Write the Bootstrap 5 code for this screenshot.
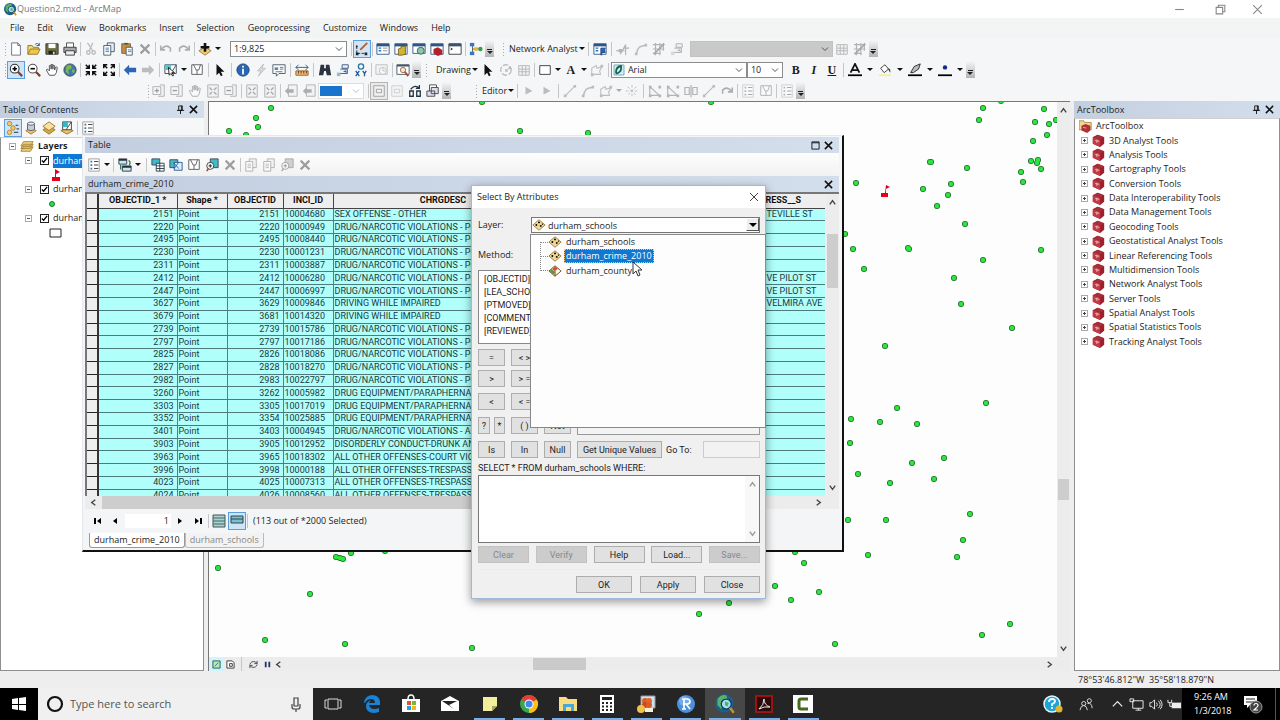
<!DOCTYPE html>
<html lang="en">
<head>
<meta charset="utf-8">
<meta name="viewport" content="width=device-width, initial-scale=1">
<title>Question2.mxd - ArcMap</title>
<link href="https://cdn.jsdelivr.net/npm/bootstrap@5.3.0/dist/css/bootstrap.min.css" rel="stylesheet">
<style>
:root{--ui:"Open Sans","Noto Sans",sans-serif;--grid:Roboto,"Liberation Sans",sans-serif;--sel:#0f78d2;--face:#f0f0f0;--band:linear-gradient(90deg,#c3cfe0,#d3deec)}
body{font:9px/14px var(--ui);color:#1c1c1c;background:#eee}
svg{display:block;width:14px;height:14px;flex:none}
button,select,input,textarea{font:inherit;color:inherit}
.plain{background:none;border:0;padding:0}
.btn{--bs-btn-font-size:9px;--bs-btn-line-height:12px;--bs-btn-padding-x:0;--bs-btn-padding-y:0;--bs-btn-border-radius:0;--bs-btn-color:#1c1c1c}
.titlebar{height:18px;background:#fff;color:#777}
.titlebar svg{width:13px;height:13px}
.menubar{height:20px;background:#f3f4f4}
.menubar a{color:#222;text-decoration:none;padding:0 7px 0 6px}
.tools{background:#f5f6f7}
.toolrow{height:21px}
.tb{width:18px;height:18px;display:flex;align-items:center;justify-content:center;flex:none}
.tb.dim{opacity:.45;filter:grayscale(1)}
.tb.on,.tb.on:hover{background:#cfe4f7;border-color:#5a9fdd}
.tb.off-on{border-color:#b5b5b5;background:#e9e9e9}
.vsep{width:1px;height:14px;margin:0 1px;background:#c4c6c8;flex:none}
.vsep.roomy{margin:0 2px}
.grip{width:3px;height:14px;flex:none;background:radial-gradient(circle,#aaa 1px,transparent 1px) 0 0/3px 3px}
.caret{width:8px;flex:none;display:flex;justify-content:center}
.caret.broad{width:12px}
.caret::before{content:"";border:3px solid transparent;border-top-color:#111;border-bottom:0}
.caret.pale::before{border-top-color:#aaa}
.more{width:9px;height:17px;background:linear-gradient(#f5f6f7,#b4b4b4);display:flex;flex-direction:column;align-items:center;justify-content:flex-end;gap:1px;padding-bottom:3px;flex:none}
.more::before{content:"";width:5px;height:1px;background:#222}
.more::after{content:"";border:3px solid transparent;border-top-color:#222;border-bottom:0}
.combo{appearance:none;height:16px;border:1px solid #8c8c8c;border-radius:0;padding:0 3px;line-height:13px;background:#fff url("data:image/svg+xml,%3Csvg xmlns='http://www.w3.org/2000/svg' viewBox='0 0 8 8'%3E%3Cpath d='M1 2.500l3 3 3-3' fill='none' stroke='%23555'/%3E%3C/svg%3E") no-repeat right 3px center/8px}
.combo:disabled{opacity:1;background-color:#c9c9c9;border-color:#c2c2c2}
.scale-box{width:117px}.font-box{width:136px}.size-box{width:36px}.route-box{width:143px}
.pct-box{width:46px;border-color:#ddd;background-image:linear-gradient(#1874cd,#1874cd),url("data:image/svg+xml,%3Csvg xmlns='http://www.w3.org/2000/svg' viewBox='0 0 8 8'%3E%3Cpath d='M1 2.500l3 3 3-3' fill='none' stroke='%23bbb'/%3E%3C/svg%3E");background-size:22px 10px,8px;background-position:1px center,right 3px center}
.fontmark{left:2px;top:2px;width:12px;height:12px}
.fontwrap .combo{padding-left:16px}
.serif{font:bold 12px/14px "Liberation Serif",serif}
.workspace{min-height:0}
.pane-head{height:17px;background:var(--band);padding:0 6px 0 3px;display:flex;align-items:center;flex:none}
.pane-head svg{width:9px;height:9px}
.toc{width:204px}
.toc-tools{height:19px;background:#f6f7f8}
.pane-body{background:#fff;border:1px solid #8e8e8e;border-top-color:#d0d0d0}
.toc-tree{height:101px;width:82px;margin-top:1px}
.tree{display:grid;grid-auto-rows:1fr;list-style:none;padding:0}
.tree li{display:flex;align-items:center;min-width:0;white-space:nowrap}
.fold{width:7px;height:7px;border:1px solid #aaa;background:linear-gradient(#555,#555) center/3px 1px no-repeat #fff;flex:none;padding:0}
.fold.plus{background:linear-gradient(#444,#444) center/3px 1px no-repeat,linear-gradient(#444,#444) center/1px 3px no-repeat,#fff}
.tick{appearance:none;width:9px;height:9px;border:1px solid #222;margin:0;background:#fff url("data:image/svg+xml,%3Csvg xmlns='http://www.w3.org/2000/svg' viewBox='0 0 8 8'%3E%3Cpath d='M1 4l2 2 4-5' fill='none' stroke='%23000' stroke-width='1.500'/%3E%3C/svg%3E") center/7px no-repeat;flex:none}
.picked{background:var(--sel);color:#fff}
.toolbox{width:206px}
.toolbox .tree{height:230px;margin:0}
.toolbox .tool{padding-left:6px}
.toolbox .tree svg{width:13px;height:13px}
.map{border-left:1px solid #777;border-top:1px solid #777;background:#fdfdfd;margin-left:4px}
.map-canvas{width:100%;height:100%}
.vbar{width:13px;background:#ececec;flex:none}
.vbar .thumb{width:11px;background:#cdcdcd}
.hbar{height:14px;background:#ececec;flex:none}
.arrow{width:9px;height:9px}
.map .vbar .thumb{height:21px;margin-top:364px}
.map .hbar .thumb{width:53px;height:12px;background:#cacaca;margin-left:250px}
.mapbtn{width:14px;height:13px}.mapbtn svg{width:9px;height:9px}
.statusbar{height:17px;background:#eee}
.coords{width:202px}
.table-win{left:82px;top:135px;width:762px;height:417px;background:#f4f5f6;border:1px solid #e4e8ee;border-right:2px solid #111;border-bottom:2px solid #111;padding:1px 3px 0 2px}
.table-tools{height:23px;background:linear-gradient(#fdfdfd,#f1f2f3)}
.table-win .pane-head{height:16px}
.gridbox{border:2px solid #777;border-right-width:0;border-bottom:0;height:304px;background:#f0f0f0}
.recs{table-layout:fixed;border-collapse:collapse;width:738px;font:9px/11px var(--grid);color:#1b3a3e}
.recs th{height:14px;background:#eee;color:#111;text-align:center;padding:0;border-right:1px solid #444;border-bottom:1px solid #444;overflow:hidden;font-weight:700}
.recs td{background:#b0fffb;border-right:1px solid #4d8483;border-bottom:1px solid #4d7b7b;padding:0 1px;white-space:nowrap;overflow:hidden}
.recs tbody{height:294px}
.recs .n{text-align:right;padding-right:3px}
.recs .rowmark{background:#eee;border-right:2px solid #333;border-bottom:1px solid #222}
.recs td:last-child,.recs th:last-child{border-right:0}
.c0{width:11px}.c1{width:79px}.c2{width:50px}.c3{width:56px}.c4{width:50px}.c5{width:220px}.c6{width:212px}
.gridbox .vbar .thumb{height:54px;margin-top:27px}
.table-win .hbar{height:13px}
.table-win .hbar .bar{background:#cdcdcd;width:640px}
.nav-strip{height:24px}
.nav-strip .recno{width:46px;border:0;background:#fff;text-align:right;padding:0 2px;height:14px}
.sheet-tabs{height:18px}
.sheet-tabs button{border:1px solid #bbb;border-top:0;border-radius:0 0 3px 3px;background:#f2f2f2;color:#888;padding:0 4px;height:15px}
.sheet-tabs .active{background:#fff;color:#222;border-color:#999}
.dlg{left:471px;top:185px;width:295px;height:414px;background:var(--face);border:1px solid #9fb8dc;box-shadow:0 3px 9px rgba(0,0,0,.4)}
.dlg-head{height:22px;background:#fff;padding-left:5px}
.dlg-main{padding:9px 5px 0 6px}
.face{font-family:var(--grid)}
.layer-row{height:16px}
.lbl{width:53px}
.layer-select{height:16px;border:1px solid #777;padding:0 16px;appearance:none;background:#fff;border-radius:0;line-height:13px}
.layer-mark{left:1px;top:1px}
.drop-mark{right:1px;top:1px;width:13px;height:13px;background:#eee;border:1px solid;border-color:#fff #555 #555 #fff;padding:4px 0 0 2px}
.drop-mark::before{content:"";display:block;width:0;border:4px solid transparent;border-top-color:#000;border-bottom:0}
.layer-list{left:58px;top:48px;width:236px;height:194px;border:1px solid #888;background:#fdfdfd;z-index:3}
.layer-list ul{height:43px;margin:0}
.layer-list li{padding-left:9px}
.layer-list li::before{content:"";width:8px;border-top:1px dotted #888}
.layer-list li>span{padding:0 1px;margin-left:2px;line-height:12px;border:1px solid transparent}
.layer-list li .picked{border:1px dotted #f5c080}
.layer-list .stem{left:9px;top:7px;height:29px;border-left:1px dotted #888}
.method{margin-top:15px}
.fields{width:130px;height:74px;border:1px solid #888;background:#fff;overflow:hidden;padding:3px 3px 0;border-radius:0;display:block;margin-top:8px}
.fields option{padding:0 2px;font:9px/13px var(--grid);min-height:13px}
.ops{display:grid;grid-template-columns:27px 27px 27px 1fr;grid-template-rows:21px 23px 24px 24px 17px;column-gap:6px;align-items:start;margin-top:5px}
.key{height:17px;background:#e1e1e1;border:1px solid #adadad;line-height:14px;font-family:var(--grid);white-space:nowrap}
.key:disabled{background:#ccc;border-color:#c2c2c2;color:#888;opacity:1}
.vals{grid-column:4;grid-row:1/5;height:86px;border:1px solid #999;background:#f3f3f3}
.goto{height:17px;border:1px solid #ccc;background:#f2f2f2;width:57px}
.uniq{width:85px}
.sql-lbl{margin-top:3px}
.sql{height:68px;border:1px solid #777;background:#fff;resize:none;display:block;padding:2px 14px 2px 3px}
.sqlbar{right:1px;top:1px;bottom:1px;width:14px;background:#f3f3f3;opacity:.55}
.key-row{margin-top:3px}
.ok-row{margin-top:6px;padding-top:6px}
.w51{width:51px}.w56{width:56px}
.pointer{left:160px;top:75px;width:12px;height:17px;z-index:4}
.taskbar{height:32px;background:#252525;color:#fff}
.start{width:38px;background:#000}
.search{width:275px;background:#f0f0f0;color:#444;padding:0 8px;font-size:11px}
.search input{background:none;border:0;min-width:0;color:#444;outline:0}
.search input::placeholder{color:#555;opacity:1}
.search svg{width:18px;height:18px}
.apps{width:510px}
.apps button{flex:1 1 0;position:relative}
.apps svg{width:20px;height:20px}
.apps .live::after{content:"";position:absolute;bottom:0;left:4px;right:4px;height:2px;background:#76b0ea}
.apps .front{background:#474747}
.tray svg{width:15px;height:15px}
.tray .help{width:20px;height:20px}
.clock{background:#000;width:98px;font-size:9px;padding-left:12px}
.clock svg{width:20px;height:20px}
.edge{width:1px;background:#555}
</style>
</head>
<body class="vh-100 d-flex flex-column overflow-hidden position-relative">

<svg class="d-none" aria-hidden="true">
<symbol id="globe" viewBox="0 0 16 16"><circle cx="7.500" cy="7.500" r="7.500" fill="#1d5f86"/><path d="M2 4q3-4 7-3l1 3-3 3-2 5-3-3z" fill="#58b368"/><circle cx="9" cy="8" r="4" fill="#a7dcf0" stroke="#083a5e"/><path d="M8 6l3 1-1 3-2-1z" fill="#4fae6c"/><path d="M12 11l3 4" stroke="#c29134" stroke-width="2"/></symbol>
<symbol id="new" viewBox="0 0 16 16"><path d="M3 1h7l3 3v11H3zM10 1v3h3" fill="#fff" stroke="#667"/></symbol>
<symbol id="open" viewBox="0 0 16 16"><path d="M1 14V4h5l1 2h6v3" fill="#f7d774" stroke="#8a7326"/><path d="M1 14l3-6h11l-3 6z" fill="#f2c744" stroke="#8a7326"/><path d="M9 3q3-3 5 1m0-3v3h-3" stroke="#258" fill="none"/></symbol>
<symbol id="save" viewBox="0 0 16 16"><path d="M1 2h14v12H1z" fill="#6b6f3a" stroke="#333"/><path d="M4 2h8v5H4z" fill="#fff"/><path d="M4 10h8v4H4z" fill="#222"/><path d="M9 11h2v3H9z" fill="#ddd"/></symbol>
<symbol id="print" viewBox="0 0 16 16"><path d="M4 6V1h8v5" fill="#fff" stroke="#444"/><path d="M1 6h14v6H1z" fill="#aaa" stroke="#333"/><path d="M3 10h10v5H3z" fill="#eee" stroke="#333"/></symbol>
<symbol id="cut" viewBox="0 0 16 16"><path d="M4 1l6 9M10 1L6 10" stroke="#777" stroke-width="1.500"/><circle cx="5" cy="12" r="2" fill="none" stroke="#777" stroke-width="1.500"/><circle cx="11" cy="12" r="2" fill="none" stroke="#777" stroke-width="1.500"/></symbol>
<symbol id="copy" viewBox="0 0 16 16"><path d="M6 1h8v10H6z" fill="#e8eef8" stroke="#456"/><path d="M2 4h8v11H2z" fill="#fff" stroke="#456"/><path d="M4 7h4M4 9h4M4 11h4" stroke="#47a"/></symbol>
<symbol id="paste" viewBox="0 0 16 16"><path d="M2 2h10v11H2z" fill="#c98d3f" stroke="#664"/><path d="M5 1h4v2H5z" fill="#555"/><path d="M7 6h7v9H7z" fill="#fff" stroke="#456"/><path d="M9 9h4M9 11h4" stroke="#47a"/></symbol>
<symbol id="x" viewBox="0 0 16 16"><path d="M3 3l10 10M13 3L3 13" stroke="#333" stroke-width="2.500"/></symbol>
<symbol id="undo" viewBox="0 0 16 16"><path d="M2 4v5h5M3 8q5-6 10-1v4" fill="none" stroke="#555" stroke-width="1.800"/></symbol>
<symbol id="redo" viewBox="0 0 16 16"><path d="M14 4v5H9M13 8Q8 2 3 7v4" fill="none" stroke="#555" stroke-width="1.800"/></symbol>
<symbol id="add" viewBox="0 0 16 16"><path d="M1 10l7-4 7 4-7 5z" fill="#f0cf72" stroke="#97793a"/><path d="M8 1v10M3 6h10" stroke="#111" stroke-width="3"/></symbol>
<symbol id="edit" viewBox="0 0 16 16"><path d="M2 5v8h11" fill="none" stroke="#222" stroke-dasharray="3 1.500"/><path d="M1 12h3v3H1zM11 12h3v3h-3zM1 4h2v2H1z" fill="#222"/><path d="M6 9L14 1" stroke="#b55a2a" stroke-width="2"/></symbol>
<symbol id="toc" viewBox="0 0 16 16"><path d="M1 2h14v12H1z" fill="#fff" stroke="#2d5688"/><path d="M1 2h14v3H1z" fill="#2d5688"/><path d="M3 7h3M3 10h3" stroke="#27b" stroke-width="1.500"/><path d="M8 7h5M8 10h5" stroke="#888"/></symbol>
<symbol id="naw" viewBox="0 0 16 16"><path d="M1 2h14v12H1z" fill="#fff" stroke="#2d5688"/><path d="M1 2h14v3H1z" fill="#2d5688"/><path d="M3 7h3M3 10h3" stroke="#27b" stroke-width="1.500"/><path d="M9 15V7h5l-1 2 1 3h-4v3" fill="#2b63c0" stroke="#1c3f80"/></symbol>
<symbol id="cat" viewBox="0 0 16 16"><path d="M1 2h14v12H1z" fill="#fff" stroke="#2d5688"/><path d="M1 2h14v3H1z" fill="#2d5688"/><path d="M5 8l3-1v-2h5v9l-4 1H5z" fill="#d1b52e" stroke="#776018"/></symbol>
<symbol id="find" viewBox="0 0 16 16"><path d="M1 2h14v11H1z" fill="#fff" stroke="#2d5688"/><path d="M1 2h14v3H1z" fill="#2d5688"/><circle cx="10" cy="10" r="4" fill="#8cc8a0" stroke="#357"/></symbol>
<symbol id="boxw" viewBox="0 0 16 16"><path d="M1 2h14v12H1z" fill="#fff" stroke="#2d5688"/><path d="M1 2h14v3H1z" fill="#2d5688"/><path d="M4 8l5-2 5 3v5l-5 2-5-3z" fill="#b3202a"/></symbol>
<symbol id="py" viewBox="0 0 16 16"><path d="M1 2h14v12H1z" fill="#fff" stroke="#333"/><path d="M1 2h14v3H1z" fill="#3e526c"/><path d="M3 7l2 1-2 1" fill="none" stroke="#222"/></symbol>
<symbol id="model" viewBox="0 0 16 16"><path d="M4 3v10M4 8h9" stroke="#555"/><path d="M1 1h5v4H1z" fill="#37c"/><path d="M1 11h5v4H1z" fill="#37c"/><path d="M6 6h4v4H6z" fill="#e4b32f"/><circle cx="13" cy="8" r="2.500" fill="#3a9c4b"/></symbol>
<symbol id="zin" viewBox="0 0 16 16"><path d="M10 10l5 5" stroke="#8a3b22" stroke-width="2.500"/><circle cx="6.500" cy="6.500" r="5" fill="#f6fbff" stroke="#333" stroke-width="1.200"/><path d="M6.500 4v5M4 6.500h5" stroke="#000" stroke-width="1.800"/></symbol>
<symbol id="zout" viewBox="0 0 16 16"><path d="M10 10l5 5" stroke="#8a3b22" stroke-width="2.500"/><circle cx="6.500" cy="6.500" r="5" fill="#fff" stroke="#555" stroke-width="1.200"/><path d="M4 6.500h5" stroke="#000" stroke-width="1.800"/></symbol>
<symbol id="hand" viewBox="0 0 16 16"><path d="M5 14L2 9q-1-2 1-2l2 2V3q1-1 2 0l0 4V2q1-1 2 0v5-4q1-1 2 0v5l1-3q1-1 2 0l-1 6-2 3z" fill="#fff" stroke="#444"/></symbol>
<symbol id="world" viewBox="0 0 16 16"><circle cx="8" cy="8" r="7" fill="#3f78b5" stroke="#345"/><path d="M4 3l5-1 1 4-4 2 1 5-4-3zM11 7l3 1-2 4-2-2z" fill="#7eb648"/></symbol>
<symbol id="shrink" viewBox="0 0 16 16"><path d="M2 2l4 4m0-4v4H2M14 2l-4 4m0-4v4h4M2 14l4-4m0 4v-4H2M14 14l-4-4m0 4v-4h4" fill="none" stroke="#111" stroke-width="1.700"/></symbol>
<symbol id="grow" viewBox="0 0 16 16"><path d="M6 6L2 2m0 4V2h4M10 6l4-4m0 4V2h-4M6 10l-4 4m0-4v4h4M10 10l4 4m0-4v4h-4" fill="none" stroke="#111" stroke-width="1.700"/></symbol>
<symbol id="left" viewBox="0 0 16 16"><path d="M1 8l6-6v3.500h8v5H7V14z" fill="#2f63b8"/></symbol>
<symbol id="right" viewBox="0 0 16 16"><path d="M15 8L9 2v3.500H1v5h8V14z" fill="#777"/></symbol>
<symbol id="self" viewBox="0 0 16 16"><path d="M1 2h13v10H1z" fill="#fff" stroke="#345"/><path d="M1 2h7v6H1z" fill="#5cc6cc"/><path d="M8 12L14 2" stroke="#345"/><path d="M5 5l1 9 2-2 2 3 1-1-2-3h3z" fill="#fff" stroke="#111"/></symbol>
<symbol id="clear" viewBox="0 0 16 16"><path d="M2 2h12v11H2z" fill="#fff" stroke="#555"/><path d="M4 2l3 6h3l2-6M8 8v5" fill="none" stroke="#555"/></symbol>
<symbol id="arrow" viewBox="0 0 16 16"><path d="M4 1v13l3-3 2 4 2-1-2-4h4z" fill="#111"/></symbol>
<symbol id="info" viewBox="0 0 16 16"><circle cx="8" cy="8" r="7" fill="#2a64b4" stroke="#163f78"/><path d="M8 3v2M8 6.500V13" stroke="#fff" stroke-width="2"/></symbol>
<symbol id="bolt" viewBox="0 0 16 16"><path d="M11 1L4 9h4l-3 6 8-9H9z" fill="#bbb" stroke="#777"/></symbol>
<symbol id="popup" viewBox="0 0 16 16"><path d="M1 2h14v10H8l-3 3v-3H1z" fill="#fff" stroke="#456"/><path d="M3 5h4v3H3z" fill="#58a"/><path d="M9 5h4M9 7h4M4 10h8" stroke="#666"/></symbol>
<symbol id="ruler" viewBox="0 0 16 16"><path d="M1 9h14v5H1z" fill="#f0b564" stroke="#90602a"/><path d="M4 9v3M7 9v3M10 9v3M13 9v3" stroke="#633"/><path d="M1 5h14M4 2L1 5l3 3M12 2l3 3-3 3" fill="none" stroke="#258"/></symbol>
<symbol id="bino" viewBox="0 0 16 16"><path d="M3 2h4v4h2V2h4l2 12h-5l-1-5H7l-1 5H1z" fill="#2a3440"/></symbol>
<symbol id="route" viewBox="0 0 16 16"><path d="M2 12h11V7H5M7 2h7v4H7z" fill="#eef" stroke="#357"/><path d="M1 11h4v4H1z" fill="#9bc"/><path d="M8 10l3-2 2 3z" fill="#37a"/></symbol>
<symbol id="xy" viewBox="0 0 16 16"><circle cx="8" cy="4" r="3" fill="none" stroke="#27a" stroke-width="1.500"/><path d="M2 9l4 6M6 9l-4 6M10 9l2 3 2-3M12 12v3" stroke="#245a9c" stroke-width="1.500" fill="none"/></symbol>
<symbol id="time" viewBox="0 0 16 16"><path d="M1 2h13v11H1z" fill="#eee" stroke="#777"/><circle cx="9" cy="9" r="4" fill="#fff" stroke="#777"/><path d="M9 6v3h3" stroke="#777" fill="none"/></symbol>
<symbol id="viewer" viewBox="0 0 16 16"><path d="M1 2h14v11H1z" fill="#fff" stroke="#456"/><path d="M1 2h14v2H1z" fill="#456"/><circle cx="8" cy="8" r="3" fill="#f7e4e0" stroke="#963"/><path d="M10 10l4 5" stroke="#a42" stroke-width="2"/></symbol>
<symbol id="rot" viewBox="0 0 16 16"><circle cx="8" cy="8" r="6" fill="none" stroke="#777" stroke-width="1.500" stroke-dasharray="6 2"/><path d="M7 7h3v3H7zM12 3l3 4h-5z" fill="#777"/></symbol>
<symbol id="gridi" viewBox="0 0 16 16"><path d="M2 3h12v11H2zM2 7h12M2 10h12M6 3v11M10 3v11" fill="#eee" stroke="#666"/></symbol>
<symbol id="netadd" viewBox="0 0 16 16"><path d="M0 10h10M5 14l6-11v12M9 7h6" fill="none" stroke="#666" stroke-width="1.300"/><path d="M3 8h4v4H3z" fill="#666"/></symbol>
<symbol id="netgrid" viewBox="0 0 16 16"><path d="M1 3h13M1 8h13M1 13h9M4 1v14M9 1v14M13 1v9" fill="none" stroke="#666" stroke-width="1.400"/><path d="M2 14L14 2" stroke="#444" stroke-width="2"/></symbol>
<symbol id="sq" viewBox="0 0 16 16"><path d="M2 3h12v10H2z" fill="#fff" stroke="#333"/></symbol>
<symbol id="poly" viewBox="0 0 16 16"><path d="M2 13V6l5-3 1 3 6-2-3 5 1 4z" fill="none" stroke="#777" stroke-width="1.200"/><path d="M1 12h3v3H1zM12 2h3v3h-3z" fill="#777"/></symbol>
<symbol id="bucket" viewBox="0 0 16 16"><path d="M3 6l5-4 4 5-5 4z" fill="#fff" stroke="#333"/><path d="M11 6q4 0 3 5l-2-3z" fill="#444"/><path d="M1 13h14v2H1z" fill="#f5f090"/></symbol>
<symbol id="pen" viewBox="0 0 16 16"><path d="M3 11l4-7 7-3-2 6-6 4z" fill="#bbb" stroke="#222"/><path d="M0 13h16v2H0z"/></symbol>
<symbol id="dotc" viewBox="0 0 16 16"><circle cx="8" cy="5" r="2.500" fill="#112a8c"/><path d="M0 13h16v2H0z"/></symbol>
<symbol id="pgin" viewBox="0 0 16 16"><path d="M9 1h5v13H7" fill="#eee" stroke="#555"/><path d="M1 3h9v9H1z" fill="#f4f4f4" stroke="#555"/><path d="M5.500 5v5M3 7.500h5" stroke="#333" stroke-width="1.500"/></symbol>
<symbol id="pgout" viewBox="0 0 16 16"><path d="M9 1h5v13H7" fill="#eee" stroke="#555"/><path d="M1 3h9v9H1z" fill="#f4f4f4" stroke="#555"/><path d="M3 7.500h5" stroke="#333" stroke-width="1.500"/></symbol>
<symbol id="pgarr" viewBox="0 0 16 16"><path d="M5 1h10v13H5z" fill="#eee" stroke="#555"/><path d="M1 8l4-4v2h6v4H5v2z" fill="#555"/></symbol>
<symbol id="page4" viewBox="0 0 16 16"><path d="M2 1h12v14H2z" fill="#eee" stroke="#555"/><path d="M4 4l3 3M12 4L9 7M4 12l3-3M12 12L9 9" stroke="#444" stroke-width="1.500"/></symbol>
<symbol id="draft" viewBox="0 0 16 16"><path d="M2 2h12v12H2zM5 6h6v4H5z" fill="#f2f2f2" stroke="#999"/></symbol>
<symbol id="swap" viewBox="0 0 16 16"><path d="M2 14V8h4v6zM10 14V8h4v6z" fill="#fff" stroke="#234" stroke-width="1.500"/><path d="M3 6q5-6 10-1M13 1v4H9" fill="none" stroke="#234" stroke-width="1.500"/></symbol>
<symbol id="layout" viewBox="0 0 16 16"><path d="M4 1h8v9H4z" fill="#fff" stroke="#444"/><path d="M1 8h9v6H1zM6 4h8v7H6z" fill="#dde" stroke="#444"/></symbol>
<symbol id="tri" viewBox="0 0 16 16"><path d="M4 3v9l8-4z" fill="#777"/></symbol>
<symbol id="line" viewBox="0 0 16 16"><path d="M3 13L13 3" stroke="#777" stroke-width="1.500"/><path d="M1 12h3v3H1zM12 1h3v3h-3z" fill="#777"/></symbol>
<symbol id="curve" viewBox="0 0 16 16"><path d="M3 13Q4 4 13 4" fill="none" stroke="#777" stroke-width="1.500"/><path d="M1 12h3v3H1zM12 2h3v3h-3z" fill="#777"/></symbol>
<symbol id="star" viewBox="0 0 16 16"><path d="M8 1v14M1 8h14M3 3l10 10M13 3L3 13" stroke="#777" stroke-dasharray="3 2"/></symbol>
<symbol id="verts" viewBox="0 0 16 16"><path d="M2 13V3l11 10z" fill="none" stroke="#666" stroke-width="1.300"/><path d="M1 2h3v3H1zM1 12h3v3H1zM12 12h3v3h-3zM12 2h3v3h-3z" fill="#666"/></symbol>
<symbol id="cutp" viewBox="0 0 16 16"><path d="M1 4h5v8H1zM10 4h5v8h-5zM8 1v14" fill="none" stroke="#666" stroke-width="1.400"/></symbol>
<symbol id="pin" viewBox="0 0 10 10"><path d="M3 1h4v5H3zM1 6h8M5 6v4M6 1v5" fill="none" stroke="#111"/></symbol>
<symbol id="bx" viewBox="0 0 10 10"><path d="M1 1l8 8M9 1L1 9" stroke="#111" stroke-width="1.700"/></symbol>
<symbol id="max" viewBox="0 0 10 10"><path d="M1 1h8v8H1zM1 2h8" fill="none" stroke="#111"/></symbol>
<symbol id="lst" viewBox="0 0 16 16"><path d="M2 1h12v14H2z" fill="#fff" stroke="#999"/><path d="M4 4h2M4 8h2M4 12h2" stroke="#37a" stroke-width="2"/><path d="M8 4h5M8 8h5M8 12h5" stroke="#333"/></symbol>
<symbol id="order" viewBox="0 0 16 16"><circle cx="4" cy="3" r="2.500" fill="#f2cd6a" stroke="#a8842b"/><circle cx="8" cy="8" r="2.500" fill="#f2cd6a" stroke="#a8842b"/><circle cx="4" cy="13" r="2.500" fill="#f2cd6a" stroke="#a8842b"/><path d="M11 5h3M12 9h3M9 13h5" stroke="#555" stroke-width="1.500"/></symbol>
<symbol id="src" viewBox="0 0 16 16"><path d="M2 11l6-3 6 3-6 4z" fill="#e9c46a" stroke="#a07a2a"/><path d="M4 3v7q4 2 8 0V3z" fill="#c7cdd8" stroke="#556"/><ellipse cx="8" cy="3" rx="4" ry="1.800" fill="#eef" stroke="#556"/></symbol>
<symbol id="vis" viewBox="0 0 16 16"><path d="M1 10l7-4 7 4-7 5z" fill="#d9a93f" stroke="#94702a"/><path d="M1 6l7-5 7 5-7 5z" fill="#f7e2a0" stroke="#94702a"/></symbol>
<symbol id="selt" viewBox="0 0 16 16"><path d="M1 11l7-3 7 3-7 4z" fill="#e9c46a" stroke="#94702a"/><path d="M3 1h10v9H3z" fill="#fff" stroke="#333"/><path d="M3 1h6v6H3z" fill="#35b8c4"/><path d="M7 10L13 1" stroke="#333"/></symbol>
<symbol id="layers" viewBox="0 0 16 16"><path d="M1 14l3-5h11l-3 5zM1 11l3-5h11l-3 5zM1 8l3-5h11l-3 5z" fill="#f1d48a" stroke="#a2802f"/></symbol>
<symbol id="flag" viewBox="0 0 10 14"><path d="M4 1l5 3-4 2v3h4v4H1V9h3z" fill="#e2001a"/></symbol>
<symbol id="rel" viewBox="0 0 16 16"><path d="M1 1h9v6H1zM5 9h10v6H5z" fill="#cfe6e6" stroke="#234"/><path d="M1 2h9M5 10h10" stroke="#234" stroke-width="2"/><path d="M12 3q3 1 1 5M3 8v5" fill="none" stroke="#2a7a4a" stroke-width="1.500"/></symbol>
<symbol id="selattr" viewBox="0 0 16 16"><path d="M1 1h9v7H1z" fill="#3cbcc8" stroke="#345"/><path d="M6 6h9v9H6zM6 9h9M6 12h9M10 6v9" fill="#fff" stroke="#234"/></symbol>
<symbol id="switch" viewBox="0 0 16 16"><path d="M1 2h9v9H1z" fill="#48b9c8" stroke="#345"/><path d="M6 5h9v9H6z" fill="#d8f0ff" stroke="#258"/><path d="M5 5l6 7M11 5l-5 7" stroke="#25a"/></symbol>
<symbol id="zsel" viewBox="0 0 16 16"><path d="M6 1h9v10H6z" fill="#45b9c4" stroke="#345"/><circle cx="6" cy="9" r="4" fill="#fff" stroke="#333"/><path d="M6 7v4M4 9h4" stroke="#111"/><path d="M4 12l-2 3" stroke="#a53" stroke-width="2"/></symbol>
<symbol id="box" viewBox="0 0 16 16"><path d="M1 4l6-3 8 3v8l-5 4-9-4z" fill="#9c1f2b"/><path d="M1 4l9 3v9l-9-4z" fill="#c23a46"/><path d="M1 4l6-3 8 3-5 3z" fill="#a5303a"/><path d="M4 8l5 1M6 7v4" stroke="#f0b8b8" stroke-width="1.200"/></symbol>
<symbol id="boxes" viewBox="0 0 16 16"><path d="M0 1h6l1 2h8v9H0z" fill="#f0d98a" stroke="#97843f"/><path d="M3 7l5-2 6 2v6l-4 3-7-3z" fill="#b23039"/><path d="M5 9l4 1" stroke="#f3c1c1"/></symbol>
<symbol id="pts" viewBox="0 0 16 16"><path d="M1 8l7-6 7 6-7 6z" fill="#f2d896" stroke="#9b7838"/><circle cx="8" cy="5" r="1.100"/><circle cx="5" cy="8" r="1.100"/><circle cx="10" cy="9" r="1.100"/><circle cx="12" cy="7" r=".8"/></symbol>
<symbol id="pol" viewBox="0 0 16 16"><path d="M1 8l7-6 7 6-7 6z" fill="#f0d080" stroke="#665020"/><path d="M8 3l3 2-3 3-3-2z" fill="#d8423a"/><path d="M4 6l4 3-2 3-4-4z" fill="#4a9a55"/><path d="M11 6l3 2-4 3-2-2z" fill="#fff"/><path d="M8 8v6" stroke="#665020"/></symbol>
<symbol id="up" viewBox="0 0 10 10"><path d="M2 7l3-4 3 4" fill="none" stroke="#444" stroke-width="1.500"/></symbol>
<symbol id="dn" viewBox="0 0 10 10"><path d="M2 3l3 4 3-4" fill="none" stroke="#444" stroke-width="1.500"/></symbol>
<symbol id="lt" viewBox="0 0 10 10"><path d="M7 2L3 5l4 3" fill="none" stroke="#444" stroke-width="1.500"/></symbol>
<symbol id="rt" viewBox="0 0 10 10"><path d="M3 2l4 3-4 3" fill="none" stroke="#444" stroke-width="1.500"/></symbol>
</svg>

<header class="titlebar d-flex align-items-center ps-1">
<svg><use href="#globe"/></svg><span>Question2.mxd - ArcMap</span>
<div class="ms-auto d-flex align-items-center gap-4 pe-3">
<button class="plain me-1" aria-label="Minimize"><svg viewBox="0 0 12 12"><path d="M2 6h8" stroke="#888"/></svg></button>
<button class="plain" aria-label="Restore"><svg viewBox="0 0 12 12"><path d="M2 4h6v6H2zM4 4V2h6v6H8" fill="none" stroke="#888"/></svg></button>
<button class="plain" aria-label="Close"><svg viewBox="0 0 12 12"><path d="M2 2l8 8M10 2l-8 8" stroke="#888"/></svg></button>
</div>
</header>

<nav class="menubar d-flex align-items-center ps-1 flex-shrink-0">
<a href="#">File</a><a href="#">Edit</a><a href="#">View</a><a href="#">Bookmarks</a><a href="#">Insert</a><a href="#">Selection</a><a href="#">Geoprocessing</a><a href="#">Customize</a><a href="#">Windows</a><a href="#">Help</a>
</nav>

<div class="tools flex-shrink-0">
<div class="toolrow d-flex align-items-center ps-1">
<i class="grip"></i>
<button class="btn tb" aria-label="New"><svg><use href="#new"/></svg></button><button class="btn tb" aria-label="Open"><svg><use href="#open"/></svg></button><button class="btn tb" aria-label="Save"><svg><use href="#save"/></svg></button><button class="btn tb" aria-label="Print"><svg><use href="#print"/></svg></button>
<i class="vsep"></i>
<button class="btn tb dim" aria-label="Cut"><svg><use href="#cut"/></svg></button><button class="btn tb" aria-label="Copy"><svg><use href="#copy"/></svg></button><button class="btn tb" aria-label="Paste"><svg><use href="#paste"/></svg></button><button class="btn tb dim" aria-label="Delete"><svg><use href="#x"/></svg></button>
<i class="vsep"></i>
<button class="btn tb dim" aria-label="Undo"><svg><use href="#undo"/></svg></button><button class="btn tb dim" aria-label="Redo"><svg><use href="#redo"/></svg></button>
<i class="vsep"></i>
<button class="btn tb" aria-label="Add Data"><svg><use href="#add"/></svg></button><i class="caret"></i>
<select class="combo scale-box ms-2" aria-label="Map scale"><option>1:9,825</option></select>
<i class="vsep ms-1"></i>
<button class="btn tb on" aria-label="Editor Toolbar"><svg><use href="#edit"/></svg></button>
<i class="vsep"></i>
<button class="btn tb" aria-label="Contents"><svg><use href="#toc"/></svg></button><button class="btn tb" aria-label="Catalog"><svg><use href="#cat"/></svg></button><button class="btn tb" aria-label="Search"><svg><use href="#find"/></svg></button><button class="btn tb" aria-label="Toolbox"><svg><use href="#boxw"/></svg></button><button class="btn tb" aria-label="Python"><svg><use href="#py"/></svg></button>
<i class="vsep"></i>
<button class="btn tb" aria-label="ModelBuilder"><svg><use href="#model"/></svg></button><i class="more"></i>
<i class="grip ms-2 me-1"></i>
<button class="plain d-flex align-items-center">Network Analyst<i class="caret"></i></button>
<i class="vsep roomy"></i>
<button class="btn tb" aria-label="Network window"><svg><use href="#naw"/></svg></button>
<i class="vsep roomy"></i>
<button class="btn tb dim" aria-label="Create location"><svg><use href="#netadd"/></svg></button><button class="btn tb dim" aria-label="Move location"><svg><use href="#curve"/></svg></button><button class="btn tb dim" aria-label="Solve"><svg><use href="#netgrid"/></svg></button><button class="btn tb dim" aria-label="Directions"><svg><use href="#route"/></svg></button>
<select class="combo route-box ms-1" aria-label="Network dataset" disabled><option></option></select>
<button class="btn tb dim" aria-label="Build network"><svg><use href="#gridi"/></svg></button><button class="btn tb dim" aria-label="Identify network"><svg><use href="#netgrid"/></svg></button><i class="more"></i>
</div>

<div class="toolrow d-flex align-items-center ps-1">
<i class="grip"></i>
<button class="btn tb on" aria-label="Zoom In"><svg><use href="#zin"/></svg></button><button class="btn tb" aria-label="Zoom Out"><svg><use href="#zout"/></svg></button><button class="btn tb" aria-label="Pan"><svg><use href="#hand"/></svg></button><button class="btn tb" aria-label="Full Extent"><svg><use href="#world"/></svg></button>
<i class="vsep"></i>
<button class="btn tb" aria-label="Fixed Zoom In"><svg><use href="#shrink"/></svg></button><button class="btn tb" aria-label="Fixed Zoom Out"><svg><use href="#grow"/></svg></button>
<i class="vsep"></i>
<button class="btn tb" aria-label="Previous Extent"><svg><use href="#left"/></svg></button><button class="btn tb dim" aria-label="Next Extent"><svg><use href="#right"/></svg></button>
<i class="vsep roomy"></i>
<button class="btn tb" aria-label="Select Features"><svg><use href="#self"/></svg></button><i class="caret"></i><button class="btn tb" aria-label="Clear Selection"><svg><use href="#clear"/></svg></button>
<i class="vsep roomy"></i>
<button class="btn tb" aria-label="Select Elements"><svg><use href="#arrow"/></svg></button>
<i class="vsep roomy"></i>
<button class="btn tb" aria-label="Identify"><svg><use href="#info"/></svg></button><button class="btn tb dim" aria-label="Hyperlink"><svg><use href="#bolt"/></svg></button><button class="btn tb" aria-label="HTML Popup"><svg><use href="#popup"/></svg></button>
<i class="vsep roomy"></i>
<button class="btn tb" aria-label="Measure"><svg><use href="#ruler"/></svg></button>
<i class="vsep roomy"></i>
<button class="btn tb" aria-label="Find"><svg><use href="#bino"/></svg></button><button class="btn tb" aria-label="Find Route"><svg><use href="#route"/></svg></button><button class="btn tb" aria-label="Go To XY"><svg><use href="#xy"/></svg></button>
<i class="vsep"></i>
<button class="btn tb dim" aria-label="Time Slider"><svg><use href="#time"/></svg></button>
<i class="vsep"></i>
<button class="btn tb" aria-label="Viewer Window"><svg><use href="#viewer"/></svg></button><i class="more"></i>
<i class="grip ms-1 me-1"></i>
<button class="plain d-flex align-items-center ms-1">Drawing<i class="caret"></i></button>
<button class="btn tb" aria-label="Select"><svg><use href="#arrow"/></svg></button><button class="btn tb dim" aria-label="Rotate"><svg><use href="#rot"/></svg></button><button class="btn tb dim" aria-label="Zoom to elements"><svg><use href="#gridi"/></svg></button>
<i class="vsep"></i>
<button class="btn tb" aria-label="Rectangle"><svg><use href="#sq"/></svg></button><i class="caret"></i><button class="btn tb serif">A</button><i class="caret"></i><button class="btn tb dim" aria-label="Edit vertices"><svg><use href="#poly"/></svg></button>
<i class="vsep roomy"></i>
<div class="position-relative fontwrap d-flex"><select class="combo font-box" aria-label="Font"><option>Arial</option></select><svg class="fontmark position-absolute" viewBox="0 0 12 12"><path d="M1 1h10v10H1z" fill="#d6ebff" stroke="#7ab"/><path d="M8 2q-5 1-5 6 0 2 2 1 4-2 3-7z" fill="none" stroke="#164" stroke-width="1.800"/></svg></div>
<select class="combo size-box" aria-label="Font size"><option>10</option></select>
<button class="btn tb serif ms-1">B</button><button class="btn tb serif fst-italic">I</button><button class="btn tb serif text-decoration-underline">U</button>
<i class="vsep roomy"></i>
<button class="btn tb" aria-label="Font Color"><svg viewBox="0 0 16 16"><path d="M3 11L8 1l5 10M5 8h6" fill="none" stroke="#111" stroke-width="2"/><path d="M0 13h16v2H0z"/></svg></button><i class="caret broad"></i><button class="btn tb" aria-label="Fill Color"><svg><use href="#bucket"/></svg></button><i class="caret broad"></i><button class="btn tb" aria-label="Line Color"><svg><use href="#pen"/></svg></button><i class="caret broad"></i><button class="btn tb" aria-label="Marker Color"><svg><use href="#dotc"/></svg></button><i class="caret broad"></i><i class="more"></i>
</div>

<div class="toolrow d-flex align-items-center ps-5">
<i class="grip ms-5 invisible"></i><i class="px-4"></i>
<i class="grip"></i>
<button class="btn tb dim" aria-label="Layout zoom in"><svg><use href="#pgin"/></svg></button><button class="btn tb dim" aria-label="Layout zoom out"><svg><use href="#pgout"/></svg></button><button class="btn tb dim" aria-label="Layout pan"><svg><use href="#hand"/></svg></button><button class="btn tb dim" aria-label="Whole page"><svg><use href="#page4"/></svg></button><button class="btn tb dim" aria-label="Actual size"><svg><use href="#pgout"/></svg></button>
<i class="vsep"></i>
<button class="btn tb dim" aria-label="Layout fixed in"><svg><use href="#page4"/></svg></button><button class="btn tb dim" aria-label="Layout fixed out"><svg><use href="#page4"/></svg></button>
<i class="vsep"></i>
<button class="btn tb dim" aria-label="Back extent"><svg><use href="#pgarr"/></svg></button><button class="btn tb dim" aria-label="Forward extent"><svg><use href="#pgarr"/></svg></button>
<select class="combo pct-box" aria-label="Page zoom"><option></option></select>
<i class="vsep ms-1"></i>
<button class="btn tb off-on" aria-label="Toggle draft"><svg><use href="#draft"/></svg></button><button class="btn tb dim" aria-label="Focus frame"><svg><use href="#draft"/></svg></button><button class="btn tb" aria-label="Change layout"><svg><use href="#swap"/></svg></button><button class="btn tb" aria-label="Data driven pages"><svg><use href="#layout"/></svg></button><i class="more"></i>
<i class="grip ms-4 me-1"></i>
<button class="plain d-flex align-items-center">Editor<i class="caret"></i></button>
<i class="vsep roomy"></i>
<button class="btn tb dim" aria-label="Edit tool"><svg><use href="#tri"/></svg></button><button class="btn tb dim" aria-label="Annotation tool"><svg><use href="#tri"/></svg></button>
<i class="vsep roomy"></i>
<button class="btn tb dim" aria-label="Straight segment"><svg><use href="#line"/></svg></button><button class="btn tb dim" aria-label="Arc segment"><svg><use href="#curve"/></svg></button><button class="btn tb dim" aria-label="Trace"><svg><use href="#poly"/></svg></button><i class="caret pale"></i><button class="btn tb dim" aria-label="Point"><svg><use href="#star"/></svg></button>
<i class="vsep roomy"></i>
<button class="btn tb dim" aria-label="Edit Vertices"><svg><use href="#verts"/></svg></button><button class="btn tb dim" aria-label="Reshape"><svg><use href="#verts"/></svg></button><button class="btn tb dim" aria-label="Cut Polygons"><svg><use href="#cutp"/></svg></button><button class="btn tb dim" aria-label="Split"><svg><use href="#line"/></svg></button><button class="btn tb dim" aria-label="Rotate feature"><svg><use href="#redo"/></svg></button>
<i class="vsep"></i>
<button class="btn tb dim" aria-label="Attributes"><svg><use href="#lst"/></svg></button><button class="btn tb dim" aria-label="Sketch Properties"><svg><use href="#clear"/></svg></button>
<i class="vsep"></i>
<button class="btn tb dim" aria-label="Create Features"><svg><use href="#lst"/></svg></button><i class="more"></i>
</div>
</div>

<main class="workspace flex-grow-1 d-flex">
<aside class="toc d-flex flex-column flex-shrink-0">
<div class="pane-head"><span class="me-auto">Table Of Contents</span><button class="plain me-1" aria-label="Pin"><svg><use href="#pin"/></svg></button><button class="plain" aria-label="Close contents"><svg><use href="#bx"/></svg></button></div>
<div class="toc-tools d-flex align-items-center ps-1 flex-shrink-0"><button class="btn tb on" aria-label="List by drawing order"><svg><use href="#order"/></svg></button><button class="btn tb" aria-label="List by source"><svg><use href="#src"/></svg></button><button class="btn tb" aria-label="List by visibility"><svg><use href="#vis"/></svg></button><button class="btn tb" aria-label="List by selection"><svg><use href="#selt"/></svg></button><i class="vsep"></i><button class="btn tb" aria-label="Options"><svg><use href="#lst"/></svg></button></div>
<div class="pane-body flex-grow-1 overflow-hidden">
<ul class="tree toc-tree mb-0">
<li class="ps-2 gap-1 fw-bold"><button class="fold" aria-label="Collapse layers"></button><svg><use href="#layers"/></svg>Layers</li>
<li class="ps-4"><button class="fold me-2" aria-label="Collapse"></button><input class="tick me-1" type="checkbox" id="l1" checked><label for="l1" class="picked flex-grow-1 overflow-hidden">durham_schools</label></li>
<li class="ps-5"><svg><use href="#flag"/></svg></li>
<li class="ps-4"><button class="fold me-2" aria-label="Collapse"></button><input class="tick me-1" type="checkbox" id="l2" checked><label for="l2" class="overflow-hidden">durham_crime_2010</label></li>
<li class="ps-5"><svg viewBox="0 0 14 14"><circle cx="3" cy="7" r="2.500" fill="#2fe03c" stroke="#174"/></svg></li>
<li class="ps-4"><button class="fold me-2" aria-label="Collapse"></button><input class="tick me-1" type="checkbox" id="l3" checked><label for="l3" class="overflow-hidden">durham_county</label></li>
<li class="ps-5"><svg viewBox="0 0 14 14"><path d="M1 3h11v8H1z" fill="#fff" stroke="#222"/></svg></li>
</ul>
</div>
</aside>

<section class="map flex-grow-1 d-flex flex-column overflow-hidden">
<div class="flex-grow-1 d-flex overflow-hidden">
<div class="flex-grow-1 overflow-hidden">
<svg class="map-canvas" role="img" aria-label="Crime points">
<defs><path id="crimes" d="M271 108h0M256 118h0M258 127h0M229 131h0M246 135h0M482 102h0M711 102h0M520 131h0M588 133h0M983 108h0M979 120h0M1001 101h0M1044 109h0M1035 122h0M1049 124h0M1056 120h0M1047 135h0M1033 141h0M930 162h0M931 162h0M967 168h0M1031 161h0M1037 163h0M1038 160h0M1041 169h0M1021 172h0M1023 182h0M856 183h0M923 189h0M951 184h0M948 195h0M937 206h0M965 224h0M845 234h0M853 249h0M908 248h0M909 249h0M1041 250h0M983 260h0M864 269h0M954 278h0M961 304h0M1012 328h0M885 346h0M986 403h0M897 408h0M851 419h0M880 422h0M917 424h0M850 443h0M912 463h0M944 458h0M858 474h0M890 483h0M934 479h0M848 520h0M886 520h0M970 514h0M963 540h0M868 555h0M957 557h0M795 552h0M804 563h0M775 586h0M819 592h0M791 600h0M729 603h0M699 614h0M835 644h0M982 635h0M1010 624h0M472 648h0M345 644h0M265 640h0M310 594h0M218 568h0M336 557h0M340 558h0M343 559h0M351 553h0M385 551h0"/></defs>
<g transform="translate(-209 -102)" fill="none" stroke-linecap="round"><use href="#crimes" stroke="#1d6a2a" stroke-width="6"/><use href="#crimes" stroke="#28e83a" stroke-width="4.500"/><path d="M886 185l4 2-4 2v4h2v4h-7v-4h4z" fill="#e2001a"/></g>
</svg>
</div>
<div class="vbar d-flex flex-column align-items-center"><svg class="arrow mt-1"><use href="#up"/></svg><div class="thumb"></div><svg class="arrow mt-auto mb-1"><use href="#dn"/></svg></div>
</div>
<div class="hbar d-flex align-items-center"><button class="btn mapbtn on d-flex align-items-center justify-content-center bg-info-subtle" aria-label="Data View"><svg viewBox="0 0 10 10"><path d="M1 1h8v8H1z" fill="#bfe3a8" stroke="#256"/><path d="M3 7l4-4" stroke="#287"/></svg></button><button class="btn mapbtn d-flex align-items-center justify-content-center" aria-label="Layout View"><svg viewBox="0 0 10 10"><path d="M1 1h6l2 2v6H1zM4 4h3v3H4z" fill="#fff" stroke="#333"/></svg></button><i class="vsep mx-1"></i><button class="btn mapbtn d-flex align-items-center justify-content-center" aria-label="Refresh"><svg viewBox="0 0 10 10"><path d="M1 5q1-4 6-3l2 2M9 1v3H6M9 5q-1 4-6 3L1 6M1 9V6h3" fill="none" stroke="#345"/></svg></button><button class="btn mapbtn d-flex align-items-center justify-content-center" aria-label="Pause"><svg viewBox="0 0 10 10"><path d="M3 2v6M7 2v6" stroke="#236" stroke-width="2"/></svg></button><svg class="arrow"><use href="#lt"/></svg><div class="thumb"></div><svg class="arrow ms-auto me-3"><use href="#rt"/></svg></div>
</section>

<aside class="toolbox d-flex flex-column flex-shrink-0 ms-1">
<div class="pane-head"><span class="me-auto">ArcToolbox</span><button class="plain me-1" aria-label="Pin toolbox"><svg><use href="#pin"/></svg></button><button class="plain" aria-label="Close toolbox"><svg><use href="#bx"/></svg></button></div>
<div class="pane-body flex-grow-1 overflow-hidden">
<ul class="tree">
<li class="ps-1 gap-1"><svg><use href="#boxes"/></svg>ArcToolbox</li>
<li class="tool gap-1"><button class="fold plus" aria-label="Expand"></button><svg><use href="#box"/></svg>3D Analyst Tools</li>
<li class="tool gap-1"><button class="fold plus" aria-label="Expand"></button><svg><use href="#box"/></svg>Analysis Tools</li>
<li class="tool gap-1"><button class="fold plus" aria-label="Expand"></button><svg><use href="#box"/></svg>Cartography Tools</li>
<li class="tool gap-1"><button class="fold plus" aria-label="Expand"></button><svg><use href="#box"/></svg>Conversion Tools</li>
<li class="tool gap-1"><button class="fold plus" aria-label="Expand"></button><svg><use href="#box"/></svg>Data Interoperability Tools</li>
<li class="tool gap-1"><button class="fold plus" aria-label="Expand"></button><svg><use href="#box"/></svg>Data Management Tools</li>
<li class="tool gap-1"><button class="fold plus" aria-label="Expand"></button><svg><use href="#box"/></svg>Geocoding Tools</li>
<li class="tool gap-1"><button class="fold plus" aria-label="Expand"></button><svg><use href="#box"/></svg>Geostatistical Analyst Tools</li>
<li class="tool gap-1"><button class="fold plus" aria-label="Expand"></button><svg><use href="#box"/></svg>Linear Referencing Tools</li>
<li class="tool gap-1"><button class="fold plus" aria-label="Expand"></button><svg><use href="#box"/></svg>Multidimension Tools</li>
<li class="tool gap-1"><button class="fold plus" aria-label="Expand"></button><svg><use href="#box"/></svg>Network Analyst Tools</li>
<li class="tool gap-1"><button class="fold plus" aria-label="Expand"></button><svg><use href="#box"/></svg>Server Tools</li>
<li class="tool gap-1"><button class="fold plus" aria-label="Expand"></button><svg><use href="#box"/></svg>Spatial Analyst Tools</li>
<li class="tool gap-1"><button class="fold plus" aria-label="Expand"></button><svg><use href="#box"/></svg>Spatial Statistics Tools</li>
<li class="tool gap-1"><button class="fold plus" aria-label="Expand"></button><svg><use href="#box"/></svg>Tracking Analyst Tools</li>
</ul>
</div>
</aside>
</main>

<div class="statusbar d-flex align-items-center flex-shrink-0"><span class="coords ms-auto">78°53'46.812"W&nbsp; 35°58'18.879"N</span></div>

<footer class="taskbar d-flex flex-shrink-0">
<button class="plain start d-flex align-items-center justify-content-center" aria-label="Start"><svg viewBox="0 0 14 14"><path d="M0 2l6-1v6H0zM7 1l7-1v7H7zM0 8h6v5l-6-1zM7 8h7v6l-7-1z" fill="#fff"/></svg></button>
<div class="search d-flex align-items-center"><svg viewBox="0 0 18 18"><circle cx="9" cy="9" r="7" fill="none" stroke="#111" stroke-width="2.200"/></svg><input class="flex-grow-1 ms-1" type="text" placeholder="Type here to search" aria-label="Type here to search"><svg viewBox="0 0 18 18"><path d="M7 3h4v8H7zM5 9v3q0 2 2 2h4q2 0 2-2V9M9 14v3" fill="none" stroke="#444" stroke-width="1.200"/></svg></div>
<div class="apps d-flex">
<button class="plain d-flex align-items-center justify-content-center" aria-label="Task View"><svg viewBox="0 0 20 20"><path d="M5 5h10v10H5zM4 6H2v8h2M16 6h2v8h-2" fill="none" stroke="#ddd"/></svg></button>
<button class="plain d-flex align-items-center justify-content-center" aria-label="Edge"><svg viewBox="0 0 20 20"><path d="M2 9q1-8 9-8 8 1 7 10H7q1 4 5 4 3 0 5-1v4q-3 1-6 1-7-1-7-7 0-4 5-6-1 1-2 3h6q0-4-4-4-4 0-6 4z" fill="#1b83d6"/></svg></button>
<button class="plain d-flex align-items-center justify-content-center" aria-label="Store"><svg viewBox="0 0 20 20"><path d="M1 5h18v13H1z" fill="#fff"/><path d="M7 5q0-4 3-4t3 4" fill="none" stroke="#fff" stroke-width="1.500"/><path d="M6 7h4v4H6z" fill="#e5502b"/><path d="M11 7h4v4h-4z" fill="#7cb82f"/><path d="M6 12h4v4H6z" fill="#1f9fe0"/><path d="M11 12h4v4h-4z" fill="#f5b81c"/></svg></button>
<button class="plain d-flex align-items-center justify-content-center" aria-label="Mail"><svg viewBox="0 0 20 20"><path d="M1 7l9-5 9 5v10H1z" fill="#fff"/><path d="M2 7h15l-8 4 5 4z" fill="#222"/></svg></button>
<button class="plain live d-flex align-items-center justify-content-center" aria-label="Sticky Notes"><svg viewBox="0 0 20 20"><path d="M3 3h14v9l-5 5H3z" fill="#f3ee9c"/><path d="M17 12l-5 5v-5z" fill="#a9a55a"/></svg></button>
<button class="plain live d-flex align-items-center justify-content-center" aria-label="Chrome"><svg viewBox="0 0 20 20"><circle cx="10" cy="10" r="9" fill="#35a853"/><path d="M10 10L2.200 5.500A9 9 0 0 1 17.800 5.500z" fill="#e53f30"/><path d="M10 10l7.800-4.500A9 9 0 0 1 10 19z" fill="#fbc016"/><circle cx="10" cy="10" r="4.500" fill="#fff"/><circle cx="10" cy="10" r="3.500" fill="#4285f4"/></svg></button>
<button class="plain live d-flex align-items-center justify-content-center" aria-label="File Explorer"><svg viewBox="0 0 20 20"><path d="M1 3h7l2 2h9v12H1z" fill="#f7dc83"/><path d="M5 17v-7h11v7h-3v-4H8v4z" fill="#46a9d6"/></svg></button>
<button class="plain live d-flex align-items-center justify-content-center" aria-label="Calculator"><svg viewBox="0 0 20 20"><path d="M3 1h14v18H3z" fill="#fff"/><path d="M5 3h10v3H5z" fill="#222"/><path d="M5 9h10M5 12.500h10M5 16h10" stroke="#222" stroke-width="2" stroke-dasharray="2 2"/></svg></button>
<button class="plain live d-flex align-items-center justify-content-center" aria-label="Pictures"><svg viewBox="0 0 20 20"><path d="M5 2h14v12H5z" fill="#cfe2f3" stroke="#999"/><circle cx="9" cy="7" r="3" fill="#db5a26"/><circle cx="13" cy="7" r="3" fill="#e0662c"/><circle cx="9" cy="11" r="3" fill="#c94a1e"/><circle cx="13" cy="11" r="3" fill="#db5a26"/><circle cx="5" cy="15" r="4" fill="#f3c24b"/><path d="M9 14h8v4H9z" fill="#f6f0d8"/></svg></button>
<button class="plain live d-flex align-items-center justify-content-center" aria-label="RStudio"><svg viewBox="0 0 20 20"><circle cx="10" cy="10" r="9" fill="#4a90da"/><circle cx="8" cy="7" r="5" fill="#8fc0ee" opacity=".6"/><path d="M7 5h4q3 0 3 2.500T11 10H7M8 5v10M10 10l4 5M6 15h4M6 5h2" fill="none" stroke="#fff" stroke-width="1.700"/></svg></button>
<button class="plain live front d-flex align-items-center justify-content-center" aria-label="ArcMap"><svg viewBox="0 0 16 16"><use href="#globe"/></svg></button>
<button class="plain live d-flex align-items-center justify-content-center" aria-label="Acrobat"><svg viewBox="0 0 20 20"><path d="M2 2h16v16H2z" fill="#2a0a0a" stroke="#c41212" stroke-width="1.500"/><path d="M5 15q5-4 5-10 0 6 6 8-6-1-11 2z" fill="none" stroke="#eee" stroke-width="1"/></svg></button>
<button class="plain live d-flex align-items-center justify-content-center" aria-label="Camtasia"><svg viewBox="0 0 20 20"><path d="M0 1h20v18H0z" fill="#fff"/><path d="M15 5H8q-2 0-2 2v6q0 2 2 2h7" fill="none" stroke="#466b1d" stroke-width="3"/></svg></button>
</div>
<div class="tray ms-auto d-flex align-items-center">
<svg class="help me-3" viewBox="0 0 20 20"><circle cx="9" cy="10" r="8" fill="#1fa5d5" stroke="#e8f6fb" stroke-width="1.500"/><path d="M6 8q0-3 3-3t3 2q0 2-3 3v2M9 13v2" stroke="#fff" stroke-width="1.800" fill="none"/><circle cx="16" cy="15" r="3.500" fill="#e3b52c"/></svg>
<svg class="me-3" viewBox="0 0 16 16"><circle cx="5" cy="7" r="2.200" fill="none" stroke="#ddd"/><circle cx="11" cy="4" r="2.200" fill="none" stroke="#ddd"/><path d="M1 14q1-5 4-5t4 5M9 7q5-1 5 5" fill="none" stroke="#ddd"/></svg>
<svg class="me-1" viewBox="0 0 16 16"><path d="M3 10l5-5 5 5" fill="none" stroke="#eee" stroke-width="1.300"/></svg>
<svg class="me-1" viewBox="0 0 16 16"><path d="M4 4h11v8H4zM7 14h6M10 12v2M1 2h4v3H1z" fill="#252525" stroke="#eee"/></svg>
<svg class="me-1" viewBox="0 0 16 16"><path d="M2 6h2l3-3v10l-3-3H2zM9 6q2 2 0 4M11 4q4 4 0 8M13 3q4 5 0 10" fill="none" stroke="#eee"/></svg>
<svg viewBox="0 0 16 16"><path d="M5 6h10v6H5z" fill="#eee"/><path d="M1 3v3h4V3M3 6v4h3" fill="none" stroke="#eee"/></svg>
</div>
<div class="clock d-flex align-items-center justify-content-between"><div>9:26 AM<br>1/3/2018</div><svg viewBox="0 0 20 20"><path d="M1 2h13v9H7l-3 3v-3H1z" fill="#fff"/><path d="M3 5h9M3 8h9" stroke="#222"/><circle cx="13" cy="13" r="6" fill="#444" stroke="#999"/><path d="M11 11.500q0-2 2-2t2 2q0 1-4 4.500h4" fill="none" stroke="#fff" stroke-width="1.200"/></svg><i class="edge align-self-stretch me-1"></i></div>
</footer>

<section class="table-win position-absolute">
<div class="pane-head"><span class="me-auto">Table</span><button class="plain me-1" aria-label="Maximize table"><svg><use href="#max"/></svg></button><button class="plain" aria-label="Close table"><svg><use href="#bx"/></svg></button></div>
<div class="table-tools d-flex align-items-center">
<button class="btn tb" aria-label="Table Options"><svg><use href="#lst"/></svg></button><i class="caret"></i><i class="vsep roomy"></i><button class="btn tb" aria-label="Related Tables"><svg><use href="#rel"/></svg></button><i class="caret"></i><i class="vsep roomy ms-1"></i>
<button class="btn tb" aria-label="Select By Attributes"><svg><use href="#selattr"/></svg></button><button class="btn tb" aria-label="Switch Selection"><svg><use href="#switch"/></svg></button><button class="btn tb" aria-label="Clear Selection"><svg><use href="#clear"/></svg></button><button class="btn tb" aria-label="Zoom To Selected"><svg><use href="#zsel"/></svg></button><button class="btn tb dim" aria-label="Delete Selected"><svg><use href="#x"/></svg></button>
<i class="vsep"></i><button class="btn tb dim" aria-label="Copy record"><svg><use href="#copy"/></svg></button><button class="btn tb dim" aria-label="Paste record"><svg><use href="#copy"/></svg></button><button class="btn tb dim" aria-label="Zoom highlighted"><svg><use href="#zsel"/></svg></button><button class="btn tb dim" aria-label="Delete highlighted"><svg><use href="#x"/></svg></button>
</div>
<div class="pane-head"><span class="me-auto">durham_crime_2010</span><button class="plain" aria-label="Close sheet"><svg><use href="#bx"/></svg></button></div>
<div class="gridbox d-flex overflow-hidden">
<div class="flex-grow-1 overflow-hidden">
<table class="recs">
<colgroup><col class="c0"><col class="c1"><col class="c2"><col class="c3"><col class="c4"><col class="c5"><col class="c6"><col></colgroup>
<thead><tr><th class="rowmark"></th><th>OBJECTID_1 *</th><th>Shape *</th><th>OBJECTID</th><th>INCI_ID</th><th>CHRGDESC</th><th></th><th class="text-start">RESS__S</th></tr></thead>
<tbody>
<tr><td class="rowmark"></td><td class="n">2151</td><td>Point</td><td class="n">2151</td><td>10004680</td><td>SEX OFFENSE - OTHER</td><td></td><td>TEVILLE ST</td></tr>
<tr><td class="rowmark"></td><td class="n">2220</td><td>Point</td><td class="n">2220</td><td>10000949</td><td>DRUG/NARCOTIC VIOLATIONS - POSSESS</td><td></td><td></td></tr>
<tr><td class="rowmark"></td><td class="n">2495</td><td>Point</td><td class="n">2495</td><td>10008440</td><td>DRUG/NARCOTIC VIOLATIONS - POSSESS</td><td></td><td></td></tr>
<tr><td class="rowmark"></td><td class="n">2230</td><td>Point</td><td class="n">2230</td><td>10001231</td><td>DRUG/NARCOTIC VIOLATIONS - POSSESS</td><td></td><td></td></tr>
<tr><td class="rowmark"></td><td class="n">2311</td><td>Point</td><td class="n">2311</td><td>10003887</td><td>DRUG/NARCOTIC VIOLATIONS - POSSESS</td><td></td><td></td></tr>
<tr><td class="rowmark"></td><td class="n">2412</td><td>Point</td><td class="n">2412</td><td>10006280</td><td>DRUG/NARCOTIC VIOLATIONS - POSSESS</td><td></td><td>VE PILOT ST</td></tr>
<tr><td class="rowmark"></td><td class="n">2447</td><td>Point</td><td class="n">2447</td><td>10006997</td><td>DRUG/NARCOTIC VIOLATIONS - POSSESS</td><td></td><td>VE PILOT ST</td></tr>
<tr><td class="rowmark"></td><td class="n">3627</td><td>Point</td><td class="n">3629</td><td>10009846</td><td>DRIVING WHILE IMPAIRED</td><td></td><td>VELMIRA AVE</td></tr>
<tr><td class="rowmark"></td><td class="n">3679</td><td>Point</td><td class="n">3681</td><td>10014320</td><td>DRIVING WHILE IMPAIRED</td><td></td><td></td></tr>
<tr><td class="rowmark"></td><td class="n">2739</td><td>Point</td><td class="n">2739</td><td>10015786</td><td>DRUG/NARCOTIC VIOLATIONS - POSSESS</td><td></td><td></td></tr>
<tr><td class="rowmark"></td><td class="n">2797</td><td>Point</td><td class="n">2797</td><td>10017186</td><td>DRUG/NARCOTIC VIOLATIONS - POSSESS</td><td></td><td></td></tr>
<tr><td class="rowmark"></td><td class="n">2825</td><td>Point</td><td class="n">2826</td><td>10018086</td><td>DRUG/NARCOTIC VIOLATIONS - POSSESS</td><td></td><td></td></tr>
<tr><td class="rowmark"></td><td class="n">2827</td><td>Point</td><td class="n">2828</td><td>10018270</td><td>DRUG/NARCOTIC VIOLATIONS - POSSESS</td><td></td><td></td></tr>
<tr><td class="rowmark"></td><td class="n">2982</td><td>Point</td><td class="n">2983</td><td>10022797</td><td>DRUG/NARCOTIC VIOLATIONS - POSSESS</td><td></td><td></td></tr>
<tr><td class="rowmark"></td><td class="n">3260</td><td>Point</td><td class="n">3262</td><td>10005982</td><td>DRUG EQUIPMENT/PARAPHERNALIA</td><td></td><td></td></tr>
<tr><td class="rowmark"></td><td class="n">3303</td><td>Point</td><td class="n">3305</td><td>10017019</td><td>DRUG EQUIPMENT/PARAPHERNALIA</td><td></td><td></td></tr>
<tr><td class="rowmark"></td><td class="n">3352</td><td>Point</td><td class="n">3354</td><td>10025885</td><td>DRUG EQUIPMENT/PARAPHERNALIA</td><td></td><td></td></tr>
<tr><td class="rowmark"></td><td class="n">3401</td><td>Point</td><td class="n">3403</td><td>10004945</td><td>DRUG/NARCOTIC VIOLATIONS - ALL</td><td></td><td></td></tr>
<tr><td class="rowmark"></td><td class="n">3903</td><td>Point</td><td class="n">3905</td><td>10012952</td><td>DISORDERLY CONDUCT-DRUNK AND</td><td></td><td></td></tr>
<tr><td class="rowmark"></td><td class="n">3963</td><td>Point</td><td class="n">3965</td><td>10018302</td><td>ALL OTHER OFFENSES-COURT VIOL</td><td></td><td></td></tr>
<tr><td class="rowmark"></td><td class="n">3996</td><td>Point</td><td class="n">3998</td><td>10000188</td><td>ALL OTHER OFFENSES-TRESPASS</td><td></td><td></td></tr>
<tr><td class="rowmark"></td><td class="n">4023</td><td>Point</td><td class="n">4025</td><td>10007313</td><td>ALL OTHER OFFENSES-TRESPASS</td><td></td><td></td></tr>
<tr><td class="rowmark"></td><td class="n">4024</td><td>Point</td><td class="n">4026</td><td>10008560</td><td>ALL OTHER OFFENSES-TRESPASS</td><td></td><td></td></tr>
</tbody>
</table>
</div>
<div class="vbar d-flex flex-column align-items-center"><svg class="arrow mt-1"><use href="#up"/></svg><div class="thumb"></div><svg class="arrow mt-auto mb-1"><use href="#dn"/></svg></div>
</div>
<div class="hbar d-flex align-items-center ps-1"><svg class="arrow me-1"><use href="#lt"/></svg><div class="bar align-self-stretch"></div><svg class="arrow ms-auto me-3"><use href="#rt"/></svg></div>
<div class="nav-strip d-flex align-items-center ps-1">
<button class="btn tb" aria-label="First record"><svg viewBox="0 0 14 14"><path d="M3 4h2v6H3zM10 4v6L6 7z"/></svg></button><button class="btn tb" aria-label="Previous record"><svg viewBox="0 0 14 14"><path d="M8 4v6L4 7z"/></svg></button>
<input class="recno" type="text" value="1" aria-label="Record number">
<button class="btn tb" aria-label="Next record"><svg viewBox="0 0 14 14"><path d="M5 4v6l4-3z"/></svg></button><button class="btn tb" aria-label="Last record"><svg viewBox="0 0 14 14"><path d="M9 4h2v6H9zM4 4v6l4-3z"/></svg></button>
<i class="vsep"></i><button class="btn tb" aria-label="Show all records"><svg viewBox="0 0 14 14"><path d="M1 1h12v12H1z" fill="#a9d3d0" stroke="#455"/><path d="M1 4h12M1 7h12M1 10h12" stroke="#466" stroke-width="1"/></svg></button><button class="btn tb on" aria-label="Show selected records"><svg viewBox="0 0 14 14"><path d="M1 2h12v7H1z" fill="#7bc0cc" stroke="#345"/><path d="M1 5h12" stroke="#345"/></svg></button><i class="vsep"></i>
<span class="ms-1">(113 out of *2000 Selected)</span>
</div>
<div class="sheet-tabs d-flex align-items-start"><button class="active ms-1">durham_crime_2010</button><button>durham_schools</button></div>
</section>

<section class="dlg position-absolute" role="dialog" aria-label="Select By Attributes">
<div class="dlg-head d-flex align-items-center"><span class="me-auto">Select By Attributes</span><button class="plain me-1" aria-label="Close dialog"><svg viewBox="0 0 14 14"><path d="M3 3l8 8M11 3l-8 8" stroke="#444"/></svg></button></div>
<div class="dlg-main">
<div class="layer-row d-flex align-items-center"><label class="lbl" for="layer">Layer:</label><div class="position-relative flex-grow-1 d-flex"><select id="layer" class="layer-select w-100"><option>durham_schools</option></select><svg class="layer-mark position-absolute"><use href="#pts"/></svg><i class="drop-mark position-absolute pe-none"></i></div></div>
<div class="method"><label for="fields">Method:</label></div>
<select id="fields" class="fields" size="5"><option>[OBJECTID]</option><option>[LEA_SCHOOL]</option><option>[PTMOVED]</option><option>[COMMENT]</option><option>[REVIEWED]</option></select>
<div class="ops">
<button class="btn key">=</button><button class="btn key">&lt; &gt;</button><i></i><div class="vals"></div>
<button class="btn key">&gt;</button><button class="btn key">&gt; =</button><i></i>
<button class="btn key">&lt;</button><button class="btn key">&lt; =</button><i></i>
<div class="d-flex gap-1"><button class="btn key flex-fill">?</button><button class="btn key flex-fill">*</button></div><button class="btn key">( )</button><button class="btn key">Not</button>
<button class="btn key">Is</button><button class="btn key">In</button><button class="btn key">Null</button>
<div class="d-flex align-items-center"><button class="btn key uniq">Get Unique Values</button><label class="face ms-1 me-auto" for="goto">Go To:</label><input id="goto" class="goto" type="text"></div>
</div>
<label class="face d-block sql-lbl" for="sql">SELECT * FROM durham_schools WHERE:</label>
<div class="position-relative"><textarea id="sql" class="sql w-100"></textarea><div class="sqlbar position-absolute d-flex flex-column align-items-center justify-content-between py-1 pe-none"><svg class="arrow"><use href="#up"/></svg><svg class="arrow"><use href="#dn"/></svg></div></div>
<div class="key-row d-flex justify-content-between"><button class="btn key w51" disabled>Clear</button><button class="btn key w51" disabled>Verify</button><button class="btn key w51">Help</button><button class="btn key w51">Load...</button><button class="btn key w51" disabled>Save...</button></div>
<div class="ok-row border-top border-secondary-subtle d-flex justify-content-end gap-2"><button class="btn key w56">OK</button><button class="btn key w56">Apply</button><button class="btn key w56">Close</button></div>
</div>
<div class="layer-list position-absolute"><i class="stem position-absolute"></i><ul class="tree"><li><svg><use href="#pts"/></svg><span>durham_schools</span></li><li><svg><use href="#pts"/></svg><span class="picked">durham_crime_2010</span></li><li><svg><use href="#pol"/></svg><span>durham_county</span></li></ul></div>
<svg class="pointer position-absolute" viewBox="0 0 12 17"><path d="M1 1v12l3-3 2 5 2-1-2-5h4z" fill="#fff" stroke="#333"/></svg>
</section>

<script src="https://cdn.jsdelivr.net/npm/bootstrap@5.3.0/dist/js/bootstrap.bundle.min.js"></script>
</body>
</html>
